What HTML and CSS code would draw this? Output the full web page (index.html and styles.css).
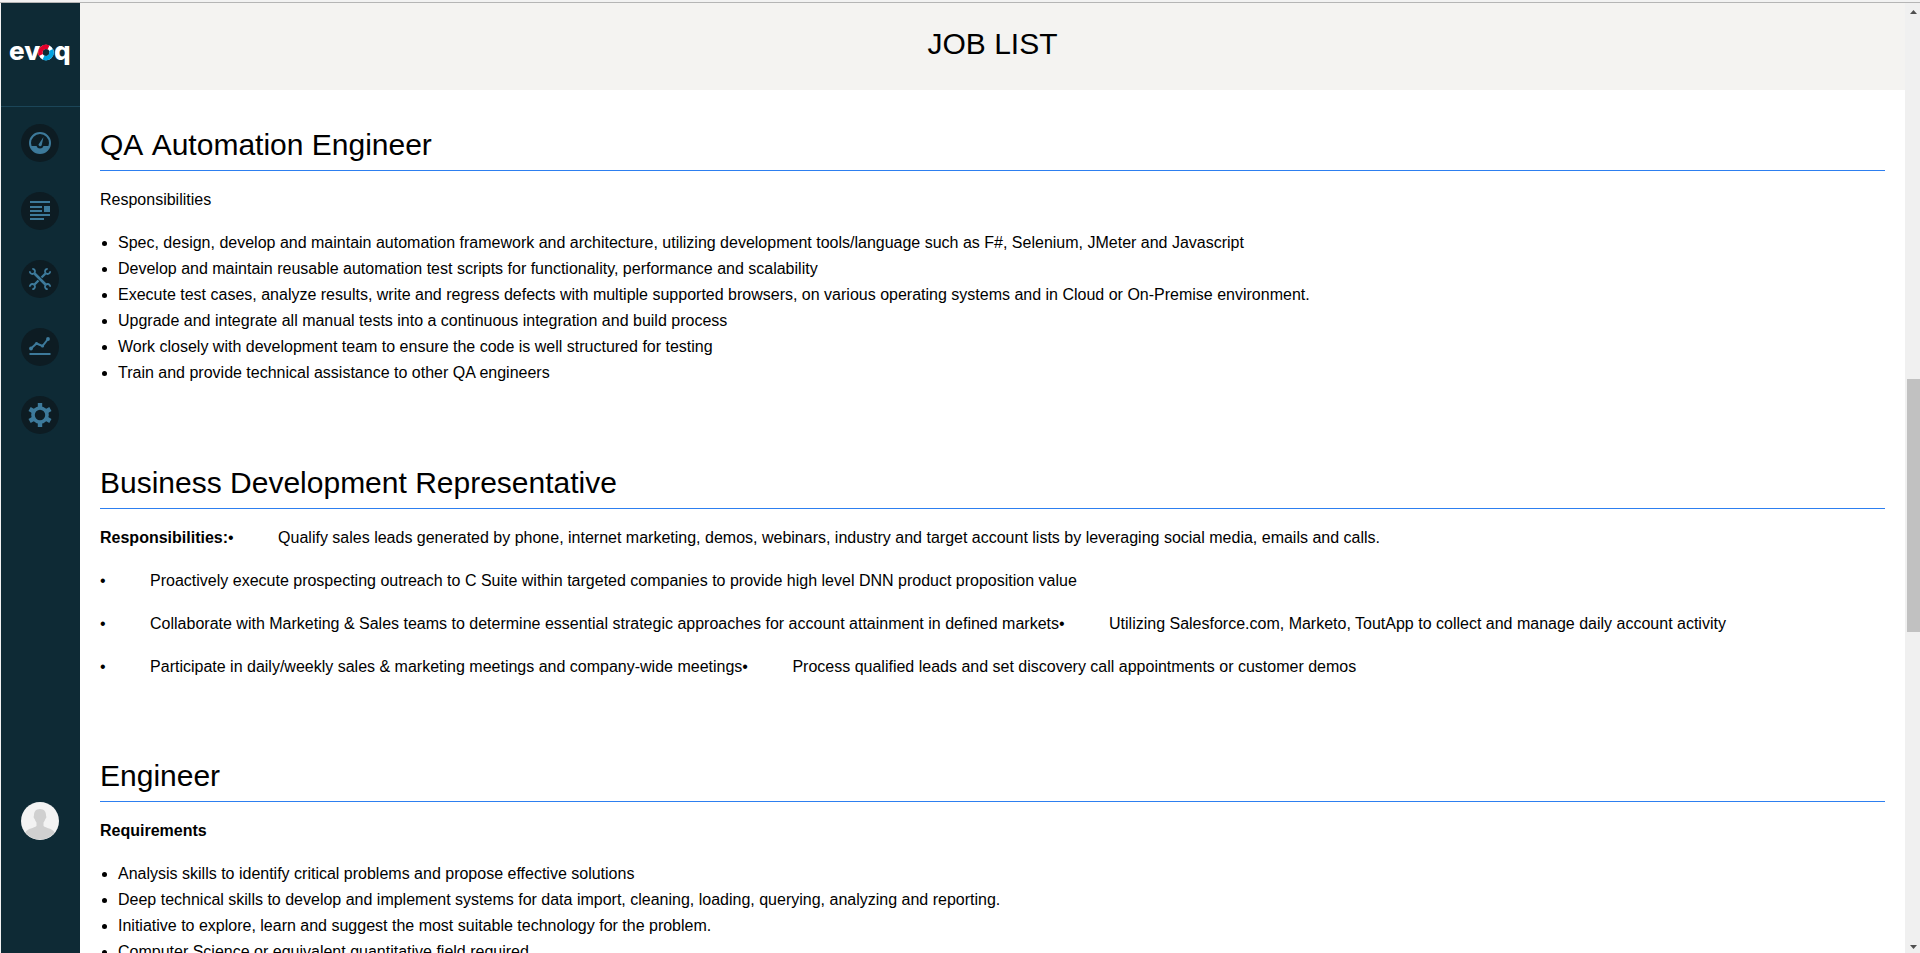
FILE: index.html
```html
<!DOCTYPE html>
<html lang="en">
<head>
<meta charset="utf-8">
<title>Job List</title>
<link rel="stylesheet" href="styles.css">
</head>
<body>
<div class="top-edge"></div>
<div class="app">
  <aside class="sidebar">
    <a class="logo" href="#" aria-label="evoq">
      <svg width="62" height="46" viewBox="0 0 62 46">
        <text class="logo-text" x="0" y="30">ev</text>
        <g fill="none" stroke-width="4.400">
          <circle cx="37" cy="22.500" r="5.600" stroke="#fff"/>
          <path d="M32 25A5.600 5.600 0 0 1 39.500 17.500" stroke="#e4002b"/>
          <path d="M42 20A5.600 5.600 0 0 1 34.500 27.500" stroke="#00a3e0"/>
        </g>
        <text class="logo-text" x="45" y="30">q</text>
      </svg>
    </a>
    <nav class="nav" aria-label="Main">
      <button class="nav-item" type="button" aria-label="Dashboard">
        <svg width="24" height="24" viewBox="0 0 24 24"><circle cx="12" cy="12" r="10" fill="none" stroke="currentColor" stroke-width="2"/><path d="M2.500 15H8.500a3.700 3.700 0 0 0 7 0h6A10 10 0 0 1 2.500 15Z" fill="currentColor"/><path d="M15.500 6l-1.800 8.300a1.700 1.700 0 0 1-3.200-.8Z" fill="currentColor"/></svg>
      </button>
      <button class="nav-item" type="button" aria-label="Content">
        <svg width="24" height="24" viewBox="0 0 24 24"><path d="M2 2h20v2H2zM2 7h12v2H2zM2 11h12v2H2zM16 7h6v6h-6zM2 15h20v2H2zM2 19h14v2H2z" fill="currentColor"/></svg>
      </button>
      <button class="nav-item" type="button" aria-label="Manage">
        <svg width="24" height="24" viewBox="0 0 24 24" fill="none" stroke="currentColor" stroke-width="2"><path d="M6.500 6.500l11 11" stroke-width="2.600"/><path d="M17.500 6.500l-4 4M10.500 13.500l-4 4" stroke-width="2.400"/><path d="M4.300 1.800A2.600 2.600 0 1 1 1.800 4.300M19.700 1.800A2.600 2.600 0 1 0 22.200 4.300M4.300 22.200A2.600 2.600 0 1 0 1.800 19.700M19.700 22.200A2.600 2.600 0 1 1 22.200 19.700" stroke-width="1.800"/></svg>
      </button>
      <button class="nav-item" type="button" aria-label="Analytics">
        <svg width="24" height="24" viewBox="0 0 24 24"><path d="M3 13.500L8.500 8.500L14.500 11L20 4" fill="none" stroke="currentColor" stroke-width="2"/><g fill="currentColor"><circle cx="3" cy="13.500" r="1.900"/><circle cx="8.500" cy="8.500" r="1.600"/><circle cx="14.500" cy="11" r="1.600"/><circle cx="20" cy="4" r="1.900"/><path d="M1.500 18h21v2h-21z"/></g></svg>
      </button>
      <button class="nav-item" type="button" aria-label="Settings">
        <svg width="24" height="24" viewBox="0 0 24 24"><circle cx="12" cy="12" r="7" fill="none" stroke="currentColor" stroke-width="3.600"/><path d="M12 0v5M12 19v5M1.600 6l4.300 2.500M18.100 15.500l4.300 2.500M1.600 18l4.300-2.500M18.100 8.500l4.300-2.500" stroke="currentColor" stroke-width="4.400"/></svg>
      </button>
    </nav>
    <button class="avatar" type="button" aria-label="Account">
      <svg width="38" height="38" viewBox="0 0 38 38"><circle cx="19" cy="19" r="19" fill="#f3f3f3"/><path d="M19 7c4.200 0 6 2.800 6 6.200 0 .8.500 1.200.3 2.300-.2 1-.9 1.200-1.200 2-.4 1.400-1.100 2.200-1.600 3V24c2.500 2.300 8.500 2 11.300 6.500a19 19 0 0 1-29.600 0C7 26 13 26.300 15.500 24v-3.500c-.5-.8-1.200-1.600-1.600-3-.3-.8-1-1-1.200-2-.2-1.100.3-1.500.3-2.300C13 9.800 14.800 7 19 7Z" fill="#d0d0d0"/></svg>
    </button>
  </aside>
  <main class="page">
    <header class="page-header"><h1 class="page-title">JOB LIST</h1></header>
    <div class="jobs">
      <section class="job">
        <h2 class="job-title">QA Automation Engineer</h2>
        <p>Responsibilities</p>
        <ul>
          <li>Spec, design, develop and maintain automation framework and architecture, utilizing development tools/language such as F#, Selenium, JMeter and Javascript</li>
          <li>Develop and maintain reusable automation test scripts for functionality, performance and scalability</li>
          <li>Execute test cases, analyze results, write and regress defects with multiple supported browsers, on various operating systems and in Cloud or On-Premise environment.</li>
          <li>Upgrade and integrate all manual tests into a continuous integration and build process</li>
          <li>Work closely with development team to ensure the code is well structured for testing</li>
          <li>Train and provide technical assistance to other QA engineers</li>
        </ul>
      </section>
      <section class="job">
        <h2 class="job-title">Business Development Representative</h2>
        <p><strong>Responsibilities:</strong>•&nbsp;&nbsp;&nbsp;&nbsp;&nbsp;&nbsp;&nbsp;&nbsp;&nbsp; Qualify sales leads generated by phone, internet marketing, demos, webinars, industry and target account lists by leveraging social media, emails and calls.</p>
        <p>•&nbsp;&nbsp;&nbsp;&nbsp;&nbsp;&nbsp;&nbsp;&nbsp;&nbsp; Proactively execute prospecting outreach to C Suite within targeted companies to provide high level DNN product proposition value</p>
        <p>•&nbsp;&nbsp;&nbsp;&nbsp;&nbsp;&nbsp;&nbsp;&nbsp;&nbsp; Collaborate with Marketing &amp; Sales teams to determine essential strategic approaches for account attainment in defined markets•&nbsp;&nbsp;&nbsp;&nbsp;&nbsp;&nbsp;&nbsp;&nbsp;&nbsp; Utilizing Salesforce.com, Marketo, ToutApp to collect and manage daily account activity</p>
        <p>•&nbsp;&nbsp;&nbsp;&nbsp;&nbsp;&nbsp;&nbsp;&nbsp;&nbsp; Participate in daily/weekly sales &amp; marketing meetings and company-wide meetings•&nbsp;&nbsp;&nbsp;&nbsp;&nbsp;&nbsp;&nbsp;&nbsp;&nbsp; Process qualified leads and set discovery call appointments or customer demos</p>
      </section>
      <section class="job">
        <h2 class="job-title">Engineer</h2>
        <p><strong>Requirements</strong></p>
        <ul>
          <li>Analysis skills to identify critical problems and propose effective solutions</li>
          <li>Deep technical skills to develop and implement systems for data import, cleaning, loading, querying, analyzing and reporting.</li>
          <li>Initiative to explore, learn and suggest the most suitable technology for the problem.</li>
          <li>Computer Science or equivalent quantitative field required</li>
        </ul>
      </section>
    </div>
  </main>
  <div class="scrollbar" aria-hidden="true">
    <svg width="7" height="4" viewBox="0 0 7 4"><path d="M0 4L3.500 0L7 4Z" fill="#505050"/></svg>
    <div class="track"><div class="thumb"></div></div>
    <svg width="7" height="4" viewBox="0 0 7 4"><path d="M0 0L3.500 4L7 0Z" fill="#505050"/></svg>
  </div>
</div>
</body>
</html>
```
FILE: styles.css
```css
* { box-sizing: border-box; }

body {
  display: flex;
  flex-direction: column;
  height: 100vh;
  margin: 0;
  overflow: hidden;
  background: #f2f2f2;
  color: #000;
  font: 16px/26px "Liberation Sans", Arial, sans-serif;
}

.top-edge {
  flex: none;
  height: 3px;
  border-bottom: 1px solid #b5b5b5;
}

.app {
  display: flex;
  flex: 1;
  min-height: 0;
  padding-left: 1px;
}

button {
  padding: 0;
  border: 0;
  cursor: pointer;
}

.sidebar {
  display: flex;
  flex: none;
  flex-direction: column;
  width: 79px;
  padding-bottom: 113px;
  background: #0e2a35;
}

.logo {
  height: 104px;
  padding: 27px 8px 0;
  border-bottom: 1px solid #1b4558;
}

.logo-text {
  fill: #fff;
  font: 800 26px Inter, sans-serif;
}

.nav {
  display: flex;
  flex: 1;
  flex-direction: column;
  gap: 30px;
  padding: 17px 20px 0;
}

.nav-item {
  display: flex;
  align-items: center;
  justify-content: center;
  width: 38px;
  height: 38px;
  border-radius: 50%;
  background: #0d1c23;
  color: #3d7a9b;
}

.avatar {
  width: 38px;
  height: 38px;
  margin-left: 20px;
  border-radius: 50%;
  background: none;
}

.avatar svg { display: block; }

.page {
  flex: 1;
  min-width: 0;
  overflow: hidden;
  background: #fff;
}

.page-header {
  padding: 23px 20px 28px;
  background: #f4f3f1;
  text-align: center;
}

.page-title,
.job-title {
  margin: 0;
  font-size: 30px;
  font-weight: 400;
  font-kerning: none;
  line-height: 36px;
}

.jobs {
  display: flex;
  flex-direction: column;
  gap: 78px;
  padding: 37px 20px;
}

.job-title {
  margin-bottom: 16px;
  padding-bottom: 7px;
  border-bottom: 1px solid #2d7ff0;
}

.job p { margin: 0 0 17px; }
.job p:last-child { margin: 0; }

.job ul {
  margin: 0 0 1px;
  padding-left: 18px;
}

.scrollbar {
  display: flex;
  flex: none;
  flex-direction: column;
  align-items: center;
  width: 15px;
  padding: 7px 0 4px 2px;
  background: #f0f0f0;
}

.track {
  flex: 1;
  width: 100%;
  padding: 6px 0;
}

.thumb {
  height: 253px;
  margin-top: 359px;
  background: #c1c1c1;
}
```
